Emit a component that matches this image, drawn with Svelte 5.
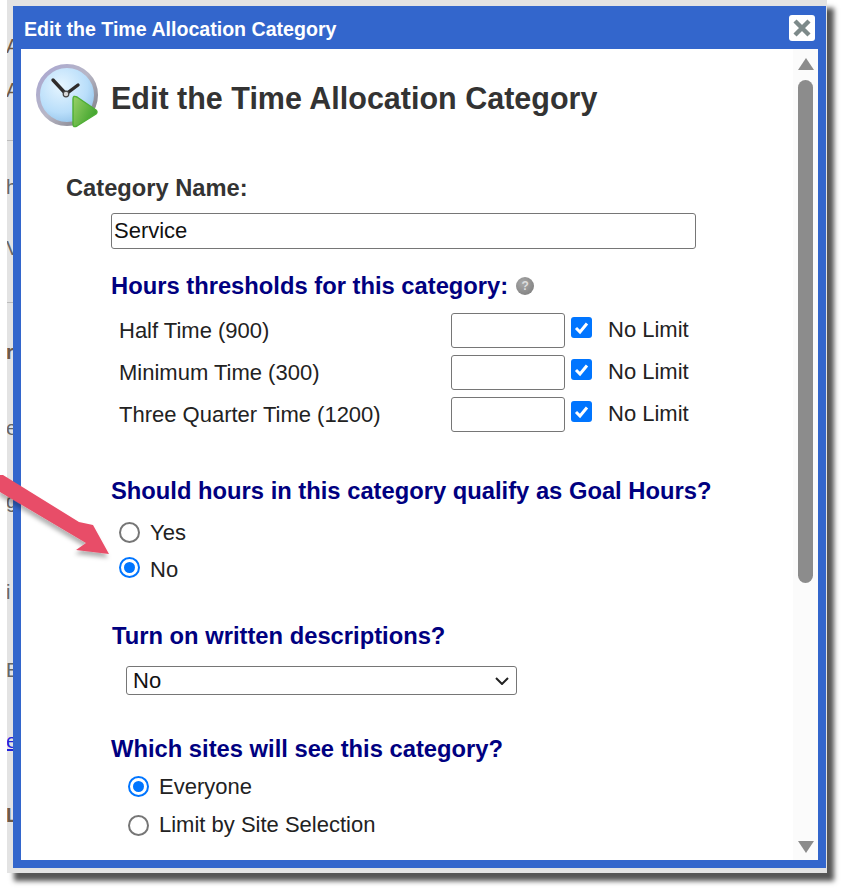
<script>
  const limits = ['Half Time (900)', 'Minimum Time (300)', 'Three Quarter Time (1200)'];
  const scraps = [
    { t: 'A', y: 34, c: 'dark' }, { t: 'A', y: 78, c: 'dark' }, { t: 'h', y: 175, c: '' }, { t: 'Ve', y: 236, c: '' },
    { t: 'r', y: 340, c: 'bold' }, { t: 'e', y: 416, c: '' }, { t: 'g', y: 489, c: '' }, { t: 'i', y: 580, c: '' },
    { t: 'E', y: 658, c: '' }, { t: 'e', y: 729, c: 'link' }, { t: 'L', y: 803, c: 'bold' }
  ];
</script>

<div class="stage">
  <div class="backdrop">
    <div class="clip">
      <div class="rule r1"></div>
      <div class="rule r2"></div>
      {#each scraps as s}
        <span class="scrap {s.c}" style="top:{s.y}px">{s.t}</span>
      {/each}
    </div>
  </div>

  <section class="dialog">
    <header class="titlebar">
      <span class="title">Edit the Time Allocation Category</span>
      <button class="close" aria-label="Close">
        <svg viewBox="0 0 24 24" width="24" height="24"><path d="M5 5 19 19M19 5 5 19" stroke="#7d8a8a" stroke-width="4.4" fill="none"/></svg>
      </button>
    </header>

    <div class="pane">
      <div class="content">
        <div class="head">
          <svg class="clock" viewBox="0 0 66 66" width="66" height="66">
            <defs>
              <radialGradient id="face" cx="0.4" cy="0.35" r="0.7">
                <stop offset="0" stop-color="#e6f5ff"/><stop offset="0.65" stop-color="#b9defa"/><stop offset="1" stop-color="#8fc0e8"/>
              </radialGradient>
              <linearGradient id="rim" x1="0" y1="0" x2="1" y2="1">
                <stop offset="0" stop-color="#a9a6d2"/><stop offset="0.5" stop-color="#b8b7c6"/><stop offset="1" stop-color="#77777e"/>
              </linearGradient>
              <linearGradient id="play" x1="0" y1="0" x2="1" y2="0.6">
                <stop offset="0" stop-color="#9ad168"/><stop offset="1" stop-color="#3ea32c"/>
              </linearGradient>
            </defs>
            <circle cx="32" cy="31" r="29" fill="url(#face)" stroke="url(#rim)" stroke-width="4"/>
            <path d="M18 16 31 30 43 21" fill="none" stroke="#2e2b2b" stroke-width="3.4" stroke-linecap="round" stroke-linejoin="round"/>
            <circle cx="31" cy="30" r="2.8" fill="#d8d8d8" stroke="#444" stroke-width="1.2"/>
            <path d="M38 35 Q38 31 42 33 L61 46 Q63 48 61 50 L42 62 Q38 64 38 60Z" fill="url(#play)" stroke="#4fae35" stroke-width="1.4"/>
          </svg>
          <h1>Edit the Time Allocation Category</h1>
        </div>

        <div class="section name">
          <label class="cat" for="cat">Category Name:</label>
          <input id="cat" class="cat-input" type="text" value="Service" />
        </div>

        <h2 class="thresh">Hours thresholds for this category:
          <span class="help">?</span>
        </h2>
        <div class="limits">
          {#each limits as l}
            <div class="limit">
              <span class="lname">{l}</span>
              <input class="num" type="text" />
              <span class="check">
                <svg viewBox="0 0 21 21" width="21" height="21"><path d="M5 11 9 15 16 6.5" fill="none" stroke="#fff" stroke-width="3"/></svg>
              </span>
              <span class="nolimit">No Limit</span>
            </div>
          {/each}
        </div>

        <h2 class="goal">Should hours in this category qualify as Goal Hours?</h2>
        <div class="radios first">
          <div class="radio-row"><span class="radio"></span>Yes</div>
          <div class="radio-row"><span class="radio on"></span>No</div>
        </div>

        <h2 class="written">Turn on written descriptions?</h2>
        <div class="select">
          <span>No</span>
          <svg viewBox="0 0 14 8" width="14" height="8"><path d="M1 1 7 7 13 1" fill="none" stroke="#222" stroke-width="2"/></svg>
        </div>

        <h2 class="sites">Which sites will see this category?</h2>
        <div class="radios second">
          <div class="radio-row"><span class="radio on"></span>Everyone</div>
          <div class="radio-row"><span class="radio"></span>Limit by Site Selection</div>
        </div>
      </div>

      <div class="scrollbar">
        <span class="arrow up"></span>
        <span class="thumb"></span>
        <span class="arrow down"></span>
      </div>
    </div>
  </section>

  <svg class="pointer" viewBox="0 0 120 100" width="120" height="100">
    <defs>
      <filter id="ds" x="-20%" y="-20%" width="140%" height="150%">
        <feDropShadow dx="-1" dy="4" stdDeviation="2" flood-color="#000" flood-opacity="0.3"/>
      </filter>
    </defs>
    <path d="M0 9 3 9 79 56 93 59 109 88 76 84 86 77 0 26Z" fill="#e84e68" filter="url(#ds)"/>
  </svg>
</div>

<style>
  :global(body) { margin: 0; background: #fff; }
  .stage {
    position: relative;
    width: 850px;
    height: 896px;
    overflow: hidden;
    font-family: "Liberation Sans", Arial, sans-serif;
    color: #222;
  }
  .backdrop {
    position: absolute;
    left: 7px;
    top: 0;
    width: 820px;
    height: 873px;
    background: #e3e3e3;
    box-shadow: 7px 8px 5px #555;
  }
  .clip { position: absolute; inset: 0; overflow: hidden; }
  .rule { position: absolute; left: 0; width: 6px; height: 1px; background: #bbb; }
  .r1 { top: 140px; }
  .r2 { top: 302px; }
  .scrap { position: absolute; left: -1px; font-size: 20px; line-height: 24px; color: #666; }
  .scrap.dark { color: #6e5a48; }
  .scrap.bold { color: #6e5a48; font-weight: bold; }
  .scrap.link { color: #2222dd; text-decoration: underline; }

  .dialog {
    position: absolute;
    left: 13px;
    top: 6px;
    width: 813px;
    height: 862px;
    box-sizing: border-box;
    background: #3366cc;
    padding: 0 8px 8px;
    display: flex;
    flex-direction: column;
  }
  .titlebar {
    height: 43px;
    flex: none;
    display: flex;
    align-items: center;
    justify-content: space-between;
    padding: 0 0 0 3px;
  }
  .title { color: #fff; font-weight: bold; font-size: 19.6px; margin-top: 3px; }
  .close {
    width: 26px;
    height: 26px;
    padding: 0;
    border: 0;
    border-radius: 3px;
    background: #fff;
    display: flex;
    align-items: center;
    justify-content: center;
    margin: 1px 3px 0 0;
  }
  .pane { flex: 1; display: flex; background: #fff; min-height: 0; }
  .content { flex: 1; overflow: hidden; min-width: 0; }

  .head { display: flex; align-items: center; gap: 10px; padding: 15px 0 0 14px; height: 66px; }
  .clock { flex: none; }
  h1 { margin: 1px 0 0; font-size: 30.5px; line-height: 34px; font-weight: bold; color: #333; }
  .section.name { padding: 45px 0 0 45px; }
  .cat { display: block; font-weight: bold; font-size: 23.7px; line-height: 26px; color: #333; }
  .cat-input {
    display: block;
    box-sizing: border-box;
    width: 585px;
    height: 36px;
    margin: 12px 0 0 45px;
    padding: 0 2px;
    border: 1px solid #767676;
    border-radius: 3px;
    font: 22px "Liberation Sans", Arial, sans-serif;
    color: #111;
  }
  h2 { margin: 0; font-size: 23.75px; line-height: 26px; font-weight: bold; color: #000080; }
  .thresh { padding: 24px 0 0 90px; display: flex; align-items: center; gap: 8px; }
  .help {
    width: 18px;
    height: 18px;
    border-radius: 50%;
    background: radial-gradient(circle at 40% 35%, #aaa, #777);
    color: #ddd;
    font-size: 12px;
    line-height: 18px;
    text-align: center;
  }
  .limits { padding: 14px 0 0 98px; display: flex; flex-direction: column; gap: 6px; }
  .limit { display: flex; align-items: center; height: 36px; font-size: 22px; }
  .lname { width: 332px; }
  .num {
    box-sizing: border-box;
    width: 114px;
    height: 35px;
    margin-top: -2px;
    border: 1px solid #767676;
    border-radius: 3px;
    padding: 0;
    background: #fff;
  }
  .check {
    width: 21px;
    height: 21px;
    margin: -8px 0 0 6px;
    border-radius: 3px;
    background: #0075ff;
  }
  .check svg { display: block; }
  .nolimit { margin: -2px 0 0 16px; }

  .goal { padding: 45px 0 0 90px; }
  .radios { display: flex; flex-direction: column; gap: 11px; font-size: 22px; color: #222; }
  .radios.first { padding: 16px 0 0 98px; }
  .radios.first .radio { margin-top: -2px; }
  .radios.first .radio.on { margin-top: -6px; }
  .radios.second { padding: 12px 0 0 107px; gap: 12px; }
  .radios.second .radio.on { margin-top: -2px; }
  .radio-row { display: flex; align-items: center; gap: 10px; height: 26px; }
  .radio {
    box-sizing: border-box;
    width: 21px;
    height: 21px;
    border-radius: 50%;
    border: 2px solid #767676;
    background: #fff;
    flex: none;
  }
  .radio.on { border-color: #0075ff; padding: 3px; background: #0075ff content-box; }

  .written { padding: 40px 0 0 91px; }
  .select {
    box-sizing: border-box;
    width: 391px;
    height: 29px;
    margin: 17px 0 0 105px;
    padding: 0 7px 0 6px;
    border: 1px solid #767676;
    border-radius: 3px;
    font-size: 22px;
    color: #111;
    display: flex;
    align-items: center;
    justify-content: space-between;
  }
  .sites { padding: 41px 0 0 90px; }

  .scrollbar {
    flex: none;
    width: 25px;
    background: #fbfbfb;
    display: flex;
    flex-direction: column;
    align-items: center;
    padding: 9px 0 7px;
    box-sizing: border-box;
  }
  .arrow { width: 0; height: 0; border-left: 8.5px solid transparent; border-right: 8.5px solid transparent; flex: none; }
  .up { border-bottom: 12px solid #8c8c8c; }
  .down { border-top: 12px solid #8c8c8c; margin-top: auto; }
  .thumb { width: 15px; height: 503px; margin-top: 10px; border-radius: 8px; background: #8c8c8c; flex: none; }

  .pointer { position: absolute; left: 0; top: 466px; }
</style>
